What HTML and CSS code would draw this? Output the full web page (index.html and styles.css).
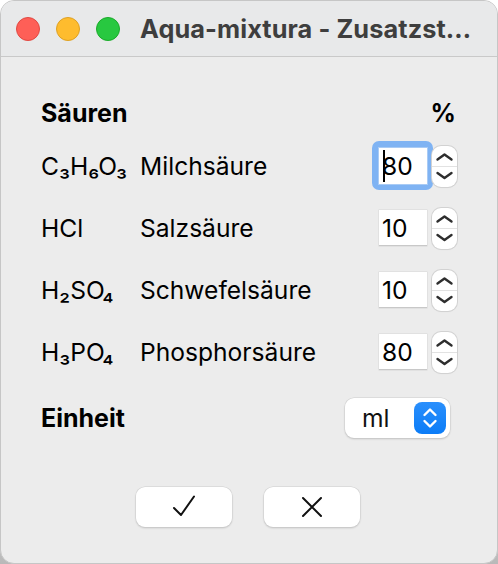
FILE: index.html
```html
<!DOCTYPE html>
<html lang="de">
<head>
<meta charset="utf-8">
<title>Aqua-mixtura - Zusatzstoffe</title>
<link rel="stylesheet" href="styles.css">
</head>
<body>
<div class="window">
  <div class="titlebar">
    <div class="lights">
      <span class="light red"></span>
      <span class="light yellow"></span>
      <span class="light green"></span>
    </div>
    <div class="title">Aqua-mixtura - Zusatzst…</div>
  </div>
  <div class="content">
    <div class="grid">
      <div class="head span2">Säuren</div>
      <div class="head pct">%</div>

      <div class="formula">C₃H₆O₃</div>
      <div class="name">Milchsäure</div>
      <div class="spin">
        <div class="ring"><div class="field focus"><span class="caret"></span>80</div></div>
        <div class="stepper">
          <svg viewBox="0 0 25 41" width="25" height="41"><path class="chev" d="M5.5 13.5 L12.5 8.5 L19.5 13.5"/><line class="sep" x1="0" y1="20.5" x2="25" y2="20.5"/><path class="chev" d="M5.5 27 L12.5 32 L19.5 27"/></svg>
        </div>
      </div>

      <div class="formula">HCl</div>
      <div class="name">Salzsäure</div>
      <div class="spin">
        <div class="field">10</div>
        <div class="stepper">
          <svg viewBox="0 0 25 41" width="25" height="41"><path class="chev" d="M5.5 13.5 L12.5 8.5 L19.5 13.5"/><line class="sep" x1="0" y1="20.5" x2="25" y2="20.5"/><path class="chev" d="M5.5 27 L12.5 32 L19.5 27"/></svg>
        </div>
      </div>

      <div class="formula">H₂SO₄</div>
      <div class="name">Schwefelsäure</div>
      <div class="spin">
        <div class="field">10</div>
        <div class="stepper">
          <svg viewBox="0 0 25 41" width="25" height="41"><path class="chev" d="M5.5 13.5 L12.5 8.5 L19.5 13.5"/><line class="sep" x1="0" y1="20.5" x2="25" y2="20.5"/><path class="chev" d="M5.5 27 L12.5 32 L19.5 27"/></svg>
        </div>
      </div>

      <div class="formula">H₃PO₄</div>
      <div class="name">Phosphorsäure</div>
      <div class="spin">
        <div class="field">80</div>
        <div class="stepper">
          <svg viewBox="0 0 25 41" width="25" height="41"><path class="chev" d="M5.5 13.5 L12.5 8.5 L19.5 13.5"/><line class="sep" x1="0" y1="20.5" x2="25" y2="20.5"/><path class="chev" d="M5.5 27 L12.5 32 L19.5 27"/></svg>
        </div>
      </div>

      <div class="head unit span2">Einheit</div>
      <div class="unitcell">
        <div class="popup">
          <span class="popup-text">ml</span>
          <span class="popup-btn">
            <svg viewBox="0 0 32 32" width="32" height="32"><path d="M10.5 13 L16 7.5 L21.5 13" /><path d="M10.5 19 L16 24.5 L21.5 19" /></svg>
          </span>
        </div>
      </div>
    </div>
    <div class="buttons">
      <button class="btn" type="button"><svg viewBox="0 0 24 24" width="24" height="24"><path d="M2 13 L9 20 L22 1.5"/></svg></button>
      <button class="btn" type="button"><svg viewBox="0 0 24 24" width="24" height="24"><path d="M3 3 L21 21 M21 3 L3 21"/></svg></button>
    </div>
  </div>
</div>
</body>
</html>
```

FILE: styles.css
```css
html, body {
  margin: 0;
  padding: 0;
}
body {
  width: 498px;
  height: 564px;
  background: linear-gradient(#ffffff 0%, #ffffff 60%, #b9b9b9 100%);
  font-family: Inter, "Noto Sans", sans-serif;
  color: #000;
  overflow: hidden;
}
.window {
  box-sizing: border-box;
  width: 498px;
  height: 564px;
  background: #ececec;
  border: 1px solid #c6c6c6;
  border-radius: 14px;
  overflow: hidden;
  display: flex;
  flex-direction: column;
}
.titlebar {
  height: 55px;
  flex: none;
  background: #e8e9ea;
  border-bottom: 1px solid #c9c9c9;
  display: flex;
  align-items: center;
  padding-left: 15px;
  gap: 20px;
}
.lights {
  display: flex;
  gap: 16px;
}
.light {
  width: 24px;
  height: 24px;
  border-radius: 50%;
  box-sizing: border-box;
}
.red { background: #fe5f57; border: 1px solid #e14942; }
.yellow { background: #febc2e; border: 1px solid #dea123; }
.green { background: #28c840; border: 1px solid #1aab29; }
.title {
  font-size: 25.3px;
  font-weight: 700;
  color: #3e3e3e;
  letter-spacing: 0.1px;
  white-space: nowrap;
}
.content {
  flex: 1;
  padding: 34px 40px 0 40px;
  display: flex;
  flex-direction: column;
}
.grid {
  display: grid;
  grid-template-columns: 99px 1fr auto;
  grid-template-rows: 44px 62px 62px 62px 62px 70px;
  align-items: center;
  font-size: 24.6px;
}
.span2 { grid-column: span 2; }
.head {
  font-weight: 700;
  font-size: 25px;
}
.pct {
  justify-self: end;
  padding-right: 1px;
}
.formula, .name {
  font-size: 24.6px;
}
.spin {
  justify-self: end;
  display: flex;
  align-items: center;
  gap: 5px;
}
.ring {
  padding: 7px 6px 6px 7px;
  margin: -7px -6px -6px -7px;
  background: #7fb3f3;
  border-radius: 7px;
}
.field {
  position: relative;
  box-sizing: border-box;
  width: 48px;
  height: 36px;
  background: #fff;
  border-bottom: 1px solid #c8c8c8;
  box-shadow: 0 0 0 0.5px #d6d6d6;
  font-size: 24.6px;
  line-height: 36px;
  padding-left: 3px;
}
.field.focus {
  border-bottom: none;
  box-shadow: 0 0 0 1px #a9cbf5;
}
.caret {
  position: absolute;
  left: 4px;
  top: 2px;
  width: 2px;
  height: 32px;
  background: #000;
}
.stepper {
  position: relative;
  width: 25px;
  height: 41px;
  background: #fff;
  border-radius: 9px;
  box-shadow: 0 0 0 1px #d2d2d2, 0 1px 1px rgba(0,0,0,0.08);
}
.stepper svg { display: block; }
.chev {
  fill: none;
  stroke: #2e2e2e;
  stroke-width: 2.4;
  stroke-linecap: round;
  stroke-linejoin: round;
}
.sep {
  stroke: #e2e2e2;
  stroke-width: 1;
}
.unitcell {
  justify-self: end;
  margin-right: 7px;
}
.popup {
  box-sizing: border-box;
  width: 105px;
  height: 40px;
  background: #fff;
  border-radius: 9px;
  box-shadow: 0 0 0 0.5px #cfcfcf, 0 1px 2px rgba(0,0,0,0.22);
  display: flex;
  align-items: center;
  justify-content: space-between;
  padding: 0 4px 0 17px;
}
.popup-text {
  font-size: 24.6px;
  color: #111;
}
.popup-btn {
  width: 32px;
  height: 32px;
  border-radius: 8px;
  background: linear-gradient(#2a8ffc, #0b7cf7);
}
.popup-btn svg { display: block; }
.popup-btn path {
  fill: none;
  stroke: #fff;
  stroke-width: 2.4;
  stroke-linecap: round;
  stroke-linejoin: round;
}
.buttons {
  display: flex;
  justify-content: center;
  gap: 32px;
  margin-top: 34px;
  padding-right: 2px;
}
.btn {
  width: 96px;
  height: 40px;
  border: none;
  border-radius: 9px;
  background: #fff;
  box-shadow: 0 0 0 0.5px #d0d0d0, 0 1px 2px rgba(0,0,0,0.22);
  display: flex;
  align-items: center;
  justify-content: center;
  padding: 0;
}
.btn svg path {
  fill: none;
  stroke: #111;
  stroke-width: 2;
  stroke-linecap: round;
  stroke-linejoin: round;
}
```
